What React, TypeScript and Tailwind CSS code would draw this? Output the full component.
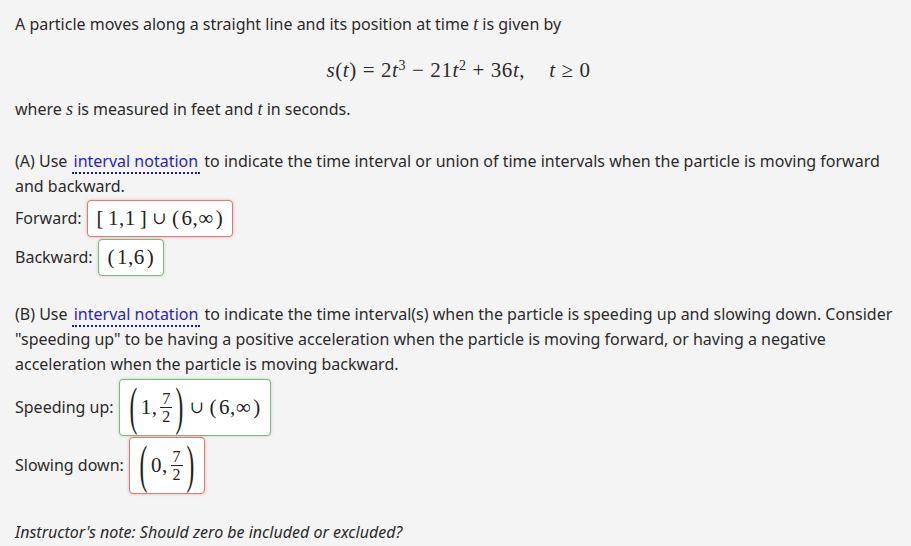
import React from 'react';

const sans = { fontFamily: '"Noto Sans", "Open Sans", sans-serif' };
const serif = { fontFamily: '"Liberation Serif", "DejaVu Serif", serif' };

const Var = ({ children }: { children: React.ReactNode }) => (
  <i className="text-[18px]" style={serif}>{children}</i>
);

const Link = ({ children }: { children: React.ReactNode }) => (
  <span className="px-[2px] text-[#2a1fc4] border-b-2 border-dotted border-[#1414d8]">{children}</span>
);

const Frac = ({ top, bottom }: { top: string; bottom: string }) => (
  <span className="inline-flex flex-col items-center text-[16px] leading-[17px] mx-[3px] align-middle">
    <span>{top}</span>
    <span className="h-px w-[12px] bg-[#222]"></span>
    <span>{bottom}</span>
  </span>
);

const BigParen = ({ ch }: { ch: string }) => (
  <span className="inline-block text-[26px] scale-y-[2] scale-x-[0.9] leading-none">{ch}</span>
);

const AnswerBox = ({ ok, children, tall }: { ok: boolean; children: React.ReactNode; tall?: boolean }) => (
  <div
    className={
      'inline-flex items-center bg-white rounded-[4px] border px-[9px] text-[21px] tracking-[0.5px] text-[#222] ' +
      (tall ? 'h-[57px] ' : 'h-[37px] ') +
      (ok
        ? 'border-[#7fb87f] shadow-[0_0_3px_rgba(92,184,92,0.45)]'
        : 'border-[#dc7b7b] shadow-[0_0_3px_rgba(217,83,79,0.45)]')
    }
    style={serif}
  >
    {children}
  </div>
);

export default function App() {
  return (
    <div className="min-h-[546px] w-full bg-[#f4f4f4] px-[15px] pt-[12px] text-[16px] leading-[25px] text-[#2b2b2b]" style={sans}>
      <p>
        A particle moves along a straight line and its position at time <Var>t</Var> is given by
      </p>
      <div className="flex justify-center mt-[20px] mb-[14px] text-[21px] leading-[26px] pl-[6px]" style={serif}>
        <span className="tracking-[0.6px]">
          <i>s</i>(<i>t</i>) = 2<i>t</i><sup className="text-[14px]">3</sup> − 21<i>t</i><sup className="text-[14px]">2</sup> + 36<i>t</i>,
          <span className="inline-block w-[24px]"></span>
          <i>t</i> ≥ 0
        </span>
      </div>
      <p>
        where <Var>s</Var> is measured in feet and <Var>t</Var> in seconds.
      </p>

      <p className="mt-[27px]">
        (A) Use <Link>interval notation</Link> to indicate the time interval or union of time intervals when the particle is moving forward and backward.
      </p>
      <div className="flex items-center gap-[5px] mt-[1px]">
        <span>Forward:</span>
        <AnswerBox ok={false}>
          <span>[</span><span className="mx-[4px]">1,1</span><span>]</span>
          <span className="mx-[5px] text-[17px]">∪</span>
          <span>(</span><span className="mx-[2px]">6,∞</span><span>)</span>
        </AnswerBox>
      </div>
      <div className="flex items-center gap-[5px] mt-[2px]">
        <span>Backward:</span>
        <AnswerBox ok={true}>
          <span>(</span><span className="mx-[2px]">1,6</span><span>)</span>
        </AnswerBox>
      </div>

      <p className="mt-[26px]">
        (B) Use <Link>interval notation</Link> to indicate the time interval(s) when the particle is speeding up and slowing down. Consider "speeding up" to be having a positive acceleration when the particle is moving forward, or having a negative acceleration when the particle is moving backward.
      </p>
      <div className="flex items-center gap-[5px] mt-[2px]">
        <span>Speeding up:</span>
        <AnswerBox ok={true} tall>
          <BigParen ch="(" />
          <span className="ml-[3px]">1,</span>
          <Frac top="7" bottom="2" />
          <BigParen ch=")" />
          <span className="mx-[5px] text-[17px]">∪</span>
          <span>(</span><span className="mx-[2px]">6,∞</span><span>)</span>
        </AnswerBox>
      </div>
      <div className="flex items-center gap-[5px] mt-px">
        <span>Slowing down:</span>
        <AnswerBox ok={false} tall>
          <BigParen ch="(" />
          <span className="ml-[3px]">0,</span>
          <Frac top="7" bottom="2" />
          <BigParen ch=")" />
        </AnswerBox>
      </div>

      <p className="mt-[26px] italic">Instructor's note: Should zero be included or excluded?</p>
    </div>
  );
}
